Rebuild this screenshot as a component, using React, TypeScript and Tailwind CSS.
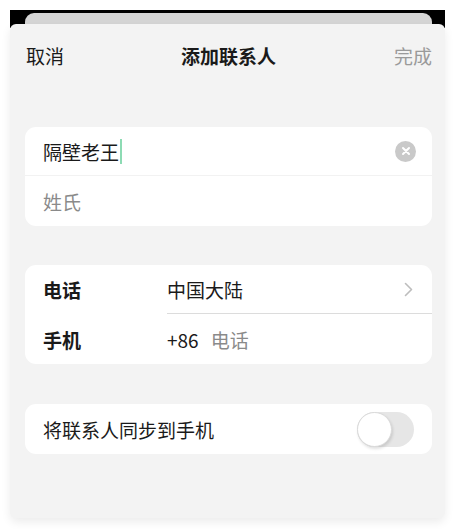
import React from "react";

const font = { fontFamily: '"Noto Sans CJK SC", "Noto Sans", sans-serif' };

export default function App() {
  return (
    <div className="w-[455px] h-[529px] bg-white pt-[10px] px-[10px] text-[#1a1a1a]" style={font}>
      <div className="w-[435px] bg-[linear-gradient(to_bottom,#000_0,#000_18px,transparent_18px)]">
        <div className="h-[14px] pt-[3px] pl-[15px] pr-[13px]">
          <div className="h-[11px] rounded-t-[9px] bg-[#d5d5d5]" />
        </div>
        <div className="h-[494px] rounded-[6px] bg-[#f3f3f3] shadow-[0_4px_10px_rgba(0,0,0,0.08)] pl-[15px] pr-[13px]">
          <div className="h-[62px] grid grid-cols-[1fr_auto_1fr] items-center text-[19px] leading-none">
            <span className="ml-[1px]">取消</span>
            <span className="font-bold">添加联系人</span>
            <span className="text-[#9a9a9a] justify-self-end">完成</span>
          </div>

          <div className="mt-[41px] bg-white rounded-[11px] text-[19px] leading-none">
            <div className="h-[49px] flex items-center pl-[18px] pr-[16px] border-b border-[#f2f2f2] ml-0">
              <span>隔壁老王</span>
              <span className="ml-[1px] w-[2px] h-[25px] bg-[#8ddbb4]" />
              <span className="flex-1" />
              <span className="w-[21px] h-[21px] rounded-full bg-[#c9c9c9] flex items-center justify-center">
                <svg width="10" height="10" viewBox="0 0 10 10">
                  <path d="M2 2L8 8M8 2L2 8" stroke="#fff" strokeWidth="2" strokeLinecap="round" />
                </svg>
              </span>
            </div>
            <div className="h-[50px] flex items-center pl-[18px] text-[#8a8a8a]">姓氏</div>
          </div>

          <div className="mt-[39px] bg-white rounded-[11px] text-[19px] leading-none">
            <div className="h-[49px] flex items-stretch">
              <div className="w-[142px] pl-[18px] flex items-center font-bold">电话</div>
              <div className="flex-1 flex items-center justify-between pr-[19px] border-b border-[#dcdcdc]">
                <span>中国大陆</span>
                <svg width="9" height="15" viewBox="0 0 9 15">
                  <path d="M1.5 1.5L7.5 7.5L1.5 13.5" stroke="#bdbdbd" strokeWidth="1.6" fill="none" strokeLinecap="round" strokeLinejoin="round" />
                </svg>
              </div>
            </div>
            <div className="h-[50px] flex items-center">
              <div className="w-[142px] pl-[18px] font-bold">手机</div>
              <span>+86</span>
              <span className="ml-[12px] text-[#8a8a8a]">电话</span>
            </div>
          </div>

          <div className="mt-[40px] bg-white rounded-[11px] h-[50px] flex items-center justify-between pl-[18px] pr-[18px] text-[19px] leading-none">
            <span>将联系人同步到手机</span>
            <div className="w-[57px] h-[35px] rounded-full bg-[#e6e6e6] relative">
              <div className="absolute left-0 top-0 w-[35px] h-[35px] rounded-full bg-white border border-[#dadada] shadow-[1px_2px_3px_rgba(0,0,0,0.12)]" />
            </div>
          </div>
        </div>
      </div>
    </div>
  );
}
